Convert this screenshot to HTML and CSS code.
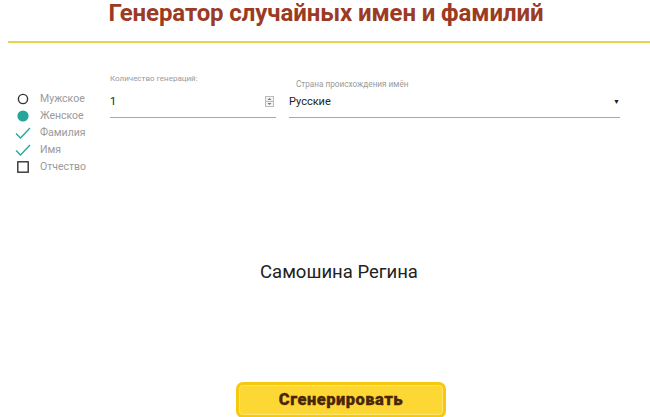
FILE: index.html
```html
<!DOCTYPE html>
<html lang="ru">
<head>
<meta charset="utf-8">
<title>Генератор случайных имен и фамилий</title>
<link rel="stylesheet" href="styles.css">
</head>
<body>
<header class="header">
  <h1 class="title">Генератор случайных имен и фамилий</h1>
</header>
<main class="main">
  <section class="controls">
    <ul class="options">
      <li class="option">
        <span class="icon"><svg width="12" height="12" viewBox="0 0 12 12"><circle cx="6" cy="6" r="4.6" fill="none" stroke="#333" stroke-width="1.4"/></svg></span>
        <span class="option-label">Мужское</span>
      </li>
      <li class="option">
        <span class="icon"><svg width="12" height="12" viewBox="0 0 12 12"><circle cx="6" cy="6" r="5.6" fill="#26a69a"/></svg></span>
        <span class="option-label">Женское</span>
      </li>
      <li class="option">
        <span class="icon"><svg width="16" height="12" viewBox="0 0 16 12"><path d="M1 6.5 L5.5 11 L15 1" fill="none" stroke="#26a69a" stroke-width="1.3"/></svg></span>
        <span class="option-label">Фамилия</span>
      </li>
      <li class="option">
        <span class="icon"><svg width="16" height="12" viewBox="0 0 16 12"><path d="M1 6.5 L5.5 11 L15 1" fill="none" stroke="#26a69a" stroke-width="1.3"/></svg></span>
        <span class="option-label">Имя</span>
      </li>
      <li class="option">
        <span class="icon"><svg width="12" height="12" viewBox="0 0 12 12"><rect x="0.8" y="0.8" width="10.4" height="10.4" fill="none" stroke="#333" stroke-width="1.4"/></svg></span>
        <span class="option-label">Отчество</span>
      </li>
    </ul>
    <div class="field field-count">
      <label class="field-label">Количество генераций:</label>
      <div class="field-input">
        <span class="field-value">1</span>
        <span class="spinner"><svg width="9" height="11" viewBox="0 0 9 11"><rect x="0.5" y="0.5" width="8" height="10" fill="#f4f4f4" stroke="#bbb"/><line x1="0.5" y1="5.5" x2="8.5" y2="5.5" stroke="#bbb"/><path d="M2.5 4 L4.5 2 L6.5 4Z" fill="#777"/><path d="M2.5 7 L4.5 9 L6.5 7Z" fill="#777"/></svg></span>
      </div>
    </div>
    <div class="field field-country">
      <label class="field-label country-label">Страна происхождения имён</label>
      <div class="field-input">
        <span class="field-value">Русские</span>
        <span class="caret">▼</span>
      </div>
    </div>
  </section>
  <section class="result">Самошина Регина</section>
  <div class="actions">
    <button class="generate">Сгенерировать</button>
  </div>
</main>
</body>
</html>
```
FILE: styles.css
```css
* { box-sizing: border-box; }
html, body { margin: 0; padding: 0; background: #fff; }
body { font-family: Roboto, "Noto Sans", sans-serif; width: 650px; height: 417px; overflow: hidden; }

.header { margin-left: 8px; height: 43px; border-bottom: 2px solid #e6d34e; display: flex; justify-content: center; }
.title { margin: 0; padding-top: 0; padding-right: 6px; font-size: 24px; line-height: 26px; font-weight: 700; color: #9b3b24; letter-spacing: -0.1px; }

.main { display: flex; flex-direction: column; }
.controls { display: flex; align-items: flex-start; padding-top: 31px; }

.options { list-style: none; margin: 16px 0 0 0; padding: 0 0 0 17px; width: 110px; display: flex; flex-direction: column; }
.option { display: flex; align-items: center; height: 17px; font-size: 10.5px; color: #9a9a9a; }
.icon { width: 23px; display: flex; align-items: center; }
.option:nth-child(3) .icon, .option:nth-child(4) .icon { margin-left: -2px; width: 25px; }

.field { display: flex; flex-direction: column; }
.field-count { width: 166px; }
.field-country { width: 331px; margin-left: 13px; }
.field-label { font-size: 8px; color: #9a9a9a; height: 10px; line-height: 10px; }
.country-label { margin-left: 7px; margin-top: 5px; font-size: 8.2px; }
.field-input { display: flex; align-items: center; justify-content: space-between; height: 30px; border-bottom: 1px solid #a8a8a8; margin-top: 4px; padding-bottom: 2px; }
.field-country .field-input { margin-top: -1px; }
.field-value { font-size: 11px; color: #222; }
.spinner { display: flex; margin-right: 2px; }
.caret { font-size: 7px; color: #222; margin-right: 0; }

.result { text-align: center; font-size: 18.5px; color: #222; padding-left: 28px; margin-top: 87px; line-height: 20px; }

.actions { display: flex; justify-content: center; padding-left: 32px; margin-top: 100px; }
.generate { width: 210px; height: 36px; flex: none; background: #fdd835; border: 3px solid #f6c90f; border-radius: 7px; box-shadow: inset 0 0 0 1px #fde36a; font-family: Roboto, sans-serif; font-weight: 900; font-size: 16.5px; color: #4a2508; letter-spacing: 0.5px; padding: 0 0 1px 0; -webkit-text-stroke: 0.3px #4a2508; }
```
